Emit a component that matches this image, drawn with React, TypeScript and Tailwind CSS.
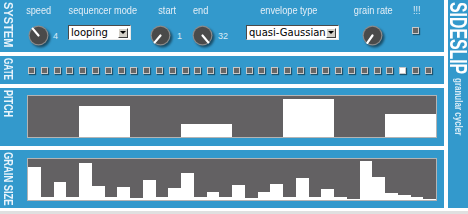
import React from "react";

const SANS = "font-['Liberation_Sans',Arial,sans-serif]";

const GATE_ON = 29;
const PITCH = [0, 31, 0, 13, 0, 38, 0, 23];
const GRAIN = [33, 3, 18, 3, 37, 14, 3, 13, 2, 20, 3, 12, 27, 3, 8, 3, 15, 2, 8, 16, 3, 22, 3, 11, 3, 1, 39, 23, 7, 5, 3, 1];

function Knob({ angle }: { angle: number }) {
  const a = (angle * Math.PI) / 180;
  const x2 = 10.5 + Math.sin(a) * 9;
  const y2 = 10.5 - Math.cos(a) * 9;
  return (
    <svg width="21" height="21" viewBox="0 0 21 21" className="block overflow-visible drop-shadow-[2px_2px_1px_rgba(0,0,0,0.5)]">
      <circle cx="10.5" cy="10.5" r="10" fill="#8a8a8a" />
      <circle cx="10.5" cy="10.5" r="8.8" fill="#4a4a4a" />
      <line x1="10.5" y1="10.5" x2={x2} y2={y2} stroke="#fff" strokeWidth="2.2" strokeLinecap="round" />
    </svg>
  );
}

function Select({ value, className }: { value: string; className: string }) {
  return (
    <div className={`flex h-[15px] items-center border border-t-[#4a4a4a] border-l-[#4a4a4a] border-r-[#e8e8e8] border-b-[#e8e8e8] bg-white pl-[2px] pr-[2px] ${className}`}>
      <span className="min-w-0 flex-1 overflow-hidden whitespace-nowrap font-['DejaVu_Sans',sans-serif] text-[10px] leading-none text-black">
        {value}
      </span>
      <span className="flex h-[10px] w-[10px] shrink-0 items-center justify-center border border-t-white border-l-white border-r-[#404040] border-b-[#404040] bg-[#d4d0c8]">
        <span className="h-0 w-0 border-x-[3px] border-t-[3px] border-x-transparent border-t-black" />
      </span>
    </div>
  );
}

function Pad({ on }: { on?: boolean }) {
  return (
    <div
      className={`h-[7px] w-[7px] shrink-0 border border-[#c8c8c8] shadow-[1px_1px_1px_rgba(0,0,0,0.45)] ${on ? "bg-white" : "bg-[#666]"}`}
    />
  );
}

function SideLabel({ text, squeeze }: { text: string; squeeze: string }) {
  return (
    <div className="w-[27px] shrink-0 pl-[2px] pt-[2px]">
      <div
        className={`${SANS} origin-top whitespace-nowrap text-[12px] font-bold leading-[11px] text-[#eaf4fb] [writing-mode:vertical-rl] ${squeeze}`}
      >
        {text}
      </div>
    </div>
  );
}

function Label({ text, className }: { text: string; className: string }) {
  return (
    <div className={`flex justify-center ${className}`}>
      <span className={`${SANS} shrink-0 scale-x-[0.8] whitespace-nowrap text-[11.5px] leading-[13px] text-[#e4eef6]`}>{text}</span>
    </div>
  );
}

function Value({ v, className }: { v: string; className: string }) {
  return <span className={`${SANS} mt-[7px] text-[9px] leading-[9px] text-[#d8ebf7] ${className}`}>{v}</span>;
}

export default function App() {
  return (
    <div className="h-[214px] w-[468px] bg-white">
      <div className="flex h-[208px]">
        <div className="flex w-[444px] flex-col gap-[4px]">
          {/* system */}
          <div className="flex h-[52px] bg-[#3399cc]">
            <SideLabel text="SYSTEM" squeeze="scale-y-[0.92]" />
            <div className="flex flex-col">
              <div className="flex pt-[4px]">
                <Label text="speed" className="w-[24px]" />
                <Label text="sequencer mode" className="ml-[17px] w-[69px]" />
                <Label text="start" className="ml-[21px] w-[19px]" />
                <Label text="end" className="ml-[16px] w-[16px]" />
                <Label text="envelope type" className="ml-[50px] w-[59px]" />
                <Label text="grain rate" className="ml-[35px] w-[40px]" />
                <Label text="!!!" className="ml-[20px] w-[7px]" />
              </div>
              <div className="mt-[8px] flex items-start">
                <div className="ml-[1px] flex w-[30px]">
                  <Knob angle={-40} />
                  <Value v="4" className="ml-[4px]" />
                </div>
                <Select value="looping" className="ml-[10px] w-[63px]" />
                <div className="ml-[19px] flex w-[31px]">
                  <Knob angle={-140} />
                  <Value v="1" className="ml-[6px]" />
                </div>
                <div className="ml-[11px] flex w-[36px]">
                  <Knob angle={140} />
                  <Value v="32" className="ml-[5px]" />
                </div>
                <Select value="quasi-Gaussian" className="ml-[18px] w-[93px]" />
                <div className="ml-[23px]">
                  <Knob angle={-145} />
                </div>
                <div className="ml-[29px] mt-[2px]">
                  <Pad />
                </div>
              </div>
            </div>
          </div>

          {/* gate */}
          <div className="flex h-[28px] bg-[#3399cc]">
            <SideLabel text="GATE" squeeze="scale-y-[0.68]" />
            <div className="ml-[1px] flex items-center gap-[5.8px]">
              {Array.from({ length: 32 }, (_, i) => (
                <Pad key={i} on={i === GATE_ON} />
              ))}
            </div>
          </div>

          {/* pitch */}
          <div className="flex h-[58px] bg-[#3399cc]">
            <SideLabel text="PITCH" squeeze="scale-y-[0.75]" />
            <div className="pt-[7px]">
              <div className="flex h-[43px] w-[410px] items-end border border-[#b4b4b4] bg-[#636163]">
                {PITCH.map((h, i) => (
                  <div key={i} className="flex-1 bg-white" style={{ height: h }} />
                ))}
              </div>
            </div>
          </div>

          {/* grain size */}
          <div className="flex h-[58px] bg-[#3399cc]">
            <SideLabel text="GRAIN SIZE" squeeze="scale-y-[0.78]" />
            <div className="pt-[8px]">
              <div className="flex h-[43px] w-[410px] items-end border border-[#b4b4b4] bg-[#636163]">
                {GRAIN.map((h, i) => (
                  <div key={i} className="flex-1 bg-white" style={{ height: h }} />
                ))}
              </div>
            </div>
          </div>
        </div>

        <div className="ml-[4px] flex h-[208px] w-[20px] flex-col items-center bg-[#3399cc] pt-[2px]">
          <div className="h-[76px]">
            <div
              className={`${SANS} origin-top scale-y-[0.66] whitespace-nowrap text-[24px] font-bold leading-[20px] text-white [writing-mode:vertical-rl]`}
            >
              SIDESLIP
            </div>
          </div>
          <div
            className={`${SANS} origin-top scale-y-[0.8] whitespace-nowrap text-[10px] font-bold leading-[10px] text-[#d5eaf6] [writing-mode:vertical-rl]`}
          >
            granular cycler
          </div>
        </div>
      </div>
      <div className="mt-[3px] h-[3px] bg-[#e0e0e0]" />
    </div>
  );
}
